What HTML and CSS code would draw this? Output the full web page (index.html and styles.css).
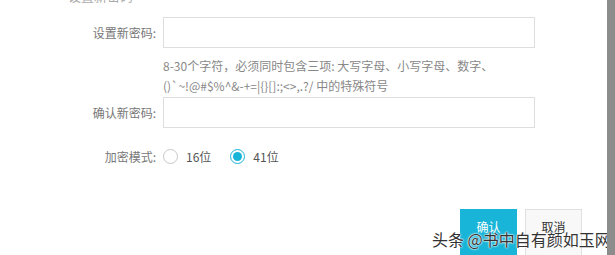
FILE: index.html
```html
<!DOCTYPE html>
<html lang="zh">
<head>
<meta charset="utf-8">
<link rel="stylesheet" href="styles.css">
</head>
<body>
<div class="screen">
  <div class="panel">
    <div class="title">设置新密码</div>
    <div class="row">
      <div class="label">设置新密码:</div>
      <div class="input"></div>
    </div>
    <div class="hint">8-30个字符，必须同时包含三项: 大写字母、小写字母、数字、<br>()`~!@#$%^&amp;-+=|{}[]:;&lt;&gt;,.?/ 中的特殊符号</div>
    <div class="row">
      <div class="label">确认新密码:</div>
      <div class="input"></div>
    </div>
    <div class="row radios">
      <div class="label">加密模式:</div>
      <div class="opts">
        <span class="radio"></span><span class="opt">16位</span>
        <span class="radio checked"></span><span class="opt">41位</span>
      </div>
    </div>
    <div class="actions">
      <div class="btn primary">确认</div>
      <div class="btn">取消</div>
    </div>
    <div class="watermark">头条 @书中自有颜如玉网</div>
  </div>
  <div class="strip"></div>
</div>
</body>
</html>
```

FILE: styles.css
```css
html, body {
  margin: 0;
  padding: 0;
  width: 615px;
  height: 255px;
  overflow: hidden;
  background: #fff;
  font-family: "Noto Sans CJK SC", "Noto Sans", sans-serif;
}
.screen {
  display: flex;
  height: 255px;
}
.panel {
  position: relative;
  width: 607px;
  height: 255px;
  overflow: hidden;
  background: #fff;
}
.strip {
  width: 8px;
  height: 255px;
  background: #8c8c8c;
}
.title {
  height: 17px;
  margin-top: -13px;
  margin-bottom: 13px;
  padding-left: 68px;
  font-size: 13px;
  line-height: 17px;
  color: #aaa;
}
.row {
  display: flex;
  align-items: center;
  gap: 7px;
}
.label {
  width: 156px;
  text-align: right;
  font-size: 12px;
  color: #777;
}
.input {
  width: 370px;
  height: 29px;
  border: 1px solid #dedede;
  background: #fff;
}
.hint {
  margin: 8px 0 1px 163px;
  font-size: 12px;
  line-height: 20px;
  color: #888;
}
.radios {
  margin-top: 17px;
  height: 22px;
}
.opts {
  display: flex;
  align-items: center;
  font-size: 12px;
  color: #555;
}
.radio {
  box-sizing: border-box;
  width: 15px;
  height: 15px;
  border: 1px solid #c8c8c8;
  border-radius: 50%;
  background: #fff;
  display: flex;
  align-items: center;
  justify-content: center;
}
.radio.checked {
  border-color: #19b5d8;
}
.radio.checked::after {
  content: "";
  width: 9px;
  height: 9px;
  border-radius: 50%;
  background: #19b5d8;
}
.opt {
  margin-left: 8px;
  margin-right: 19px;
}
.actions {
  display: flex;
  gap: 8px;
  margin-top: 42px;
  margin-left: 460px;
}
.btn {
  box-sizing: border-box;
  width: 57px;
  height: 50px;
  padding-top: 8px;
  text-align: center;
  font-size: 12px;
  line-height: 18px;
  border: 1px solid #e0e0e0;
  background: #f8f8f8;
  color: #333;
}
.btn.primary {
  width: 57px;
  border-color: #19b5d8;
  background: #19b5d8;
  color: #fff;
}
.watermark {
  position: absolute;
  left: 432px;
  top: 228px;
  font-size: 16px;
  line-height: 22px;
  color: #333;
  white-space: nowrap;
  text-shadow: 0 0 2px #fff, 0 0 2px #fff, 0 0 1px #fff;
}
```
